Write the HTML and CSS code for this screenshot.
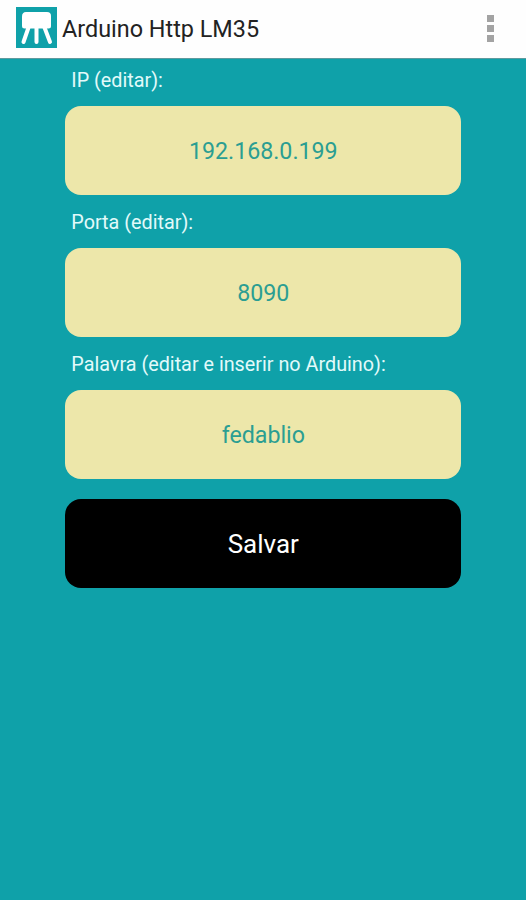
FILE: index.html
```html
<!DOCTYPE html>
<html lang="pt-BR">
<head>
<meta charset="utf-8">
<title>Arduino Http LM35</title>
<link rel="stylesheet" href="styles.css">
</head>
<body>
<header class="bar">
  <svg class="logo" viewBox="0 0 41 41" aria-hidden="true">
    <rect width="41" height="41" fill="#0fa1a9"/>
    <path d="M10 5H31Q35 5 35 9V19Q35 21.500 32.500 21.500H8.500Q6 21.500 6 19V9.500Q6 5 10 5Z" fill="#fff"/>
    <path d="M12.500 20.500 7.500 35M20.500 20.500V35M28.500 20.500 34 35" fill="none" stroke="#fff" stroke-width="4" stroke-linecap="round"/>
  </svg>
  <h1 class="title">Arduino Http LM35</h1>
  <button class="more" aria-label="Menu"><i></i><i></i><i></i></button>
</header>
<form class="form">
  <label class="label" for="ip">IP (editar):</label>
  <input class="field" id="ip" value="192.168.0.199">
  <label class="label" for="port">Porta (editar):</label>
  <input class="field" id="port" value="8090">
  <label class="label" for="word">Palavra (editar e inserir no Arduino):</label>
  <input class="field" id="word" value="fedablio">
  <button class="save" type="button">Salvar</button>
</form>
</body>
</html>
```
FILE: styles.css
```css
* {
  box-sizing: border-box;
}

body {
  margin: 0;
  min-height: 100vh;
  background: #0fa1a9;
  font-family: Roboto, sans-serif;
}

.bar {
  display: flex;
  align-items: center;
  height: 59px;
  padding: 0 32px 3px 16px;
  background: #fefefe;
  border-bottom: 1px solid #5f9a9e;
}

.logo {
  width: 41px;
  height: 41px;
}

.title {
  margin: 2px 0 0 5px;
  color: #222;
  font-size: 23.400px;
  font-weight: 400;
  line-height: 28px;
  white-space: nowrap;
}

.more {
  display: flex;
  flex-direction: column;
  gap: 3px;
  margin: 1px 0 0 auto;
  padding: 0;
  border: 0;
  background: none;
}

.more i {
  width: 7px;
  height: 7px;
  background: #a3a3a3;
}

.form {
  display: flex;
  flex-direction: column;
  width: 396px;
  margin-left: 65.300px;
}

.label {
  height: 53.300px;
  padding: 16px 0 0 6px;
  color: #e2fafa;
  font-size: 19.800px;
  line-height: 24px;
  white-space: nowrap;
}

.label:first-child {
  height: 46.600px;
  padding-top: 10px;
}

.field,
.save {
  width: 100%;
  height: 89px;
  padding: 1px 0 0;
  border: 0;
  border-radius: 16px;
  background: #ede7aa;
  color: #2b9e92;
  font: 400 23.200px/28px Roboto, sans-serif;
  text-align: center;
}

.save {
  margin-top: 20px;
  background: #000;
  color: #fff;
  font-size: 26px;
}
```
